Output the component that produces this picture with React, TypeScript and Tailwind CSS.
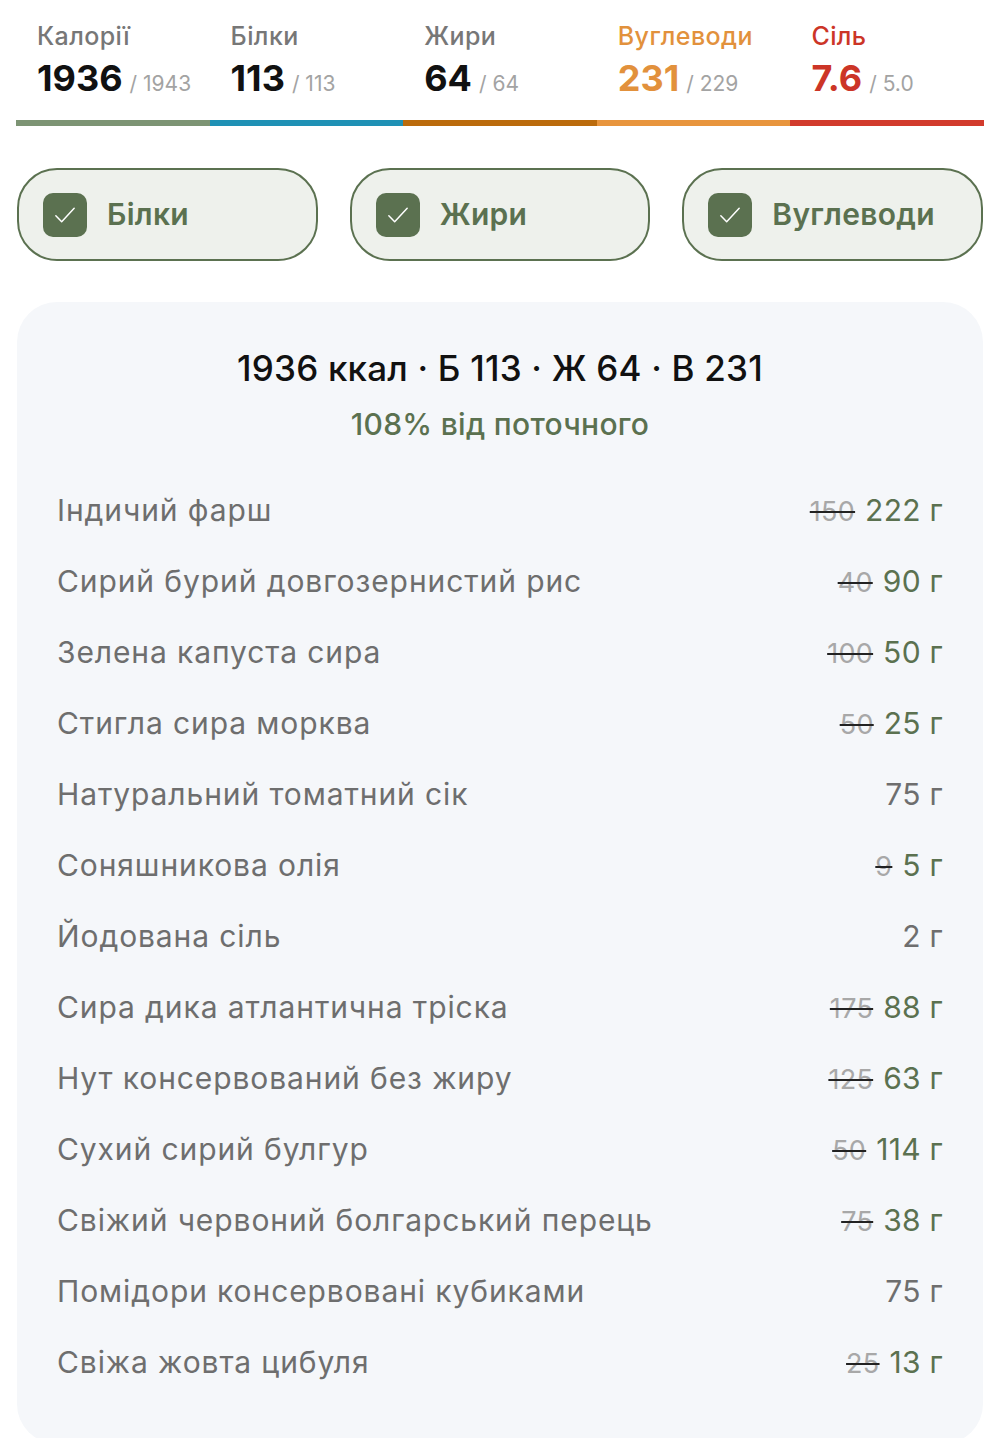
import React from 'react';

type Stat = {
  label: string;
  value: string;
  target: string;
  labelClass: string;
  valueClass: string;
  barClass: string;
};

const STATS: Stat[] = [
  { label: 'Калорії', value: '1936', target: '1943', labelClass: 'text-[#777777]', valueClass: 'text-[#111111]', barClass: 'bg-[#7d9474]' },
  { label: 'Білки', value: '113', target: '113', labelClass: 'text-[#777777]', valueClass: 'text-[#111111]', barClass: 'bg-[#1f91b5]' },
  { label: 'Жири', value: '64', target: '64', labelClass: 'text-[#777777]', valueClass: 'text-[#111111]', barClass: 'bg-[#bb6b0c]' },
  { label: 'Вуглеводи', value: '231', target: '229', labelClass: 'text-[#e2913c]', valueClass: 'text-[#e2913c]', barClass: 'bg-[#e8953d]' },
  { label: 'Сіль', value: '7.6', target: '5.0', labelClass: 'text-[#cc3527]', valueClass: 'text-[#cc3527]', barClass: 'bg-[#d23b2c]' },
];

const CHIPS = ['Білки', 'Жири', 'Вуглеводи'];

const ITEMS: { name: string; old?: string; amount: string }[] = [
  { name: 'Індичий фарш', old: '150', amount: '222 г' },
  { name: 'Сирий бурий довгозернистий рис', old: '40', amount: '90 г' },
  { name: 'Зелена капуста сира', old: '100', amount: '50 г' },
  { name: 'Стигла сира морква', old: '50', amount: '25 г' },
  { name: 'Натуральний томатний сік', amount: '75 г' },
  { name: 'Соняшникова олія', old: '9', amount: '5 г' },
  { name: 'Йодована сіль', amount: '2 г' },
  { name: 'Сира дика атлантична тріска', old: '175', amount: '88 г' },
  { name: 'Нут консервований без жиру', old: '125', amount: '63 г' },
  { name: 'Сухий сирий булгур', old: '50', amount: '114 г' },
  { name: 'Свіжий червоний болгарський перець', old: '75', amount: '38 г' },
  { name: 'Помідори консервовані кубиками', amount: '75 г' },
  { name: 'Свіжа жовта цибуля', old: '25', amount: '13 г' },
];

const Check = () => (
  <div className="w-[44px] h-[44px] rounded-[10px] bg-[#5b7150] flex items-center justify-center flex-shrink-0">
    <svg width={40} height={40} viewBox="0 0 24 24" fill="none" stroke="#ffffff" strokeWidth={0.9} strokeLinecap="round" strokeLinejoin="round">
      <path d="M6.5 12.5l3.5 3.5L17.5 8" />
    </svg>
  </div>
);

export default function App() {
  return (
    <div className="w-[1000px] min-h-[1438px] bg-white px-4 font-['Inter','Noto_Sans',sans-serif]">
      {/* stats */}
      <div className="grid grid-cols-5">
        {STATS.map(s => (
          <div key={s.label} className="flex flex-col">
            <div className={`pl-[21px] pt-[20px] text-[25px] leading-[32px] font-medium tracking-[0.4px] ${s.labelClass}`}>{s.label}</div>
            <div className="pl-[21px] mt-[3px] flex items-baseline gap-[7px] h-[46px]">
              <span className={`text-[36px] leading-[46px] font-bold ${s.valueClass}`}>{s.value}</span>
              <span className="text-[21px] text-[#a3a3a3]">/ {s.target}</span>
            </div>
            <div className={`mt-[19px] h-[6px] ${s.barClass}`} />
          </div>
        ))}
      </div>

      {/* chips */}
      <div className="mt-[42px] grid grid-cols-3 gap-[32px] px-[1px]">
        {CHIPS.map(c => (
          <div key={c} className="h-[93px] rounded-[40px] border-2 border-[#5b7150] bg-[#eef1ec] flex items-center gap-[20px] pl-[24px]">
            <Check />
            <span className="text-[30px] font-semibold tracking-[0.3px] text-[#5b7150]">{c}</span>
          </div>
        ))}
      </div>

      {/* summary card */}
      <div className="mt-[41px] mx-[1px] rounded-[40px] bg-[#f5f7fa] pt-[44px] pb-[46px] px-[40px]">
        <div className="text-center text-[35px] leading-[44px] font-medium tracking-[0.2px] text-[#111111]">1936 ккал · Б 113 · Ж 64 · В 231</div>
        <div className="mt-[16px] text-center text-[30px] leading-[36px] font-medium tracking-[0.3px] text-[#5b7150]">108% від поточного</div>
        <div className="mt-[33px] flex flex-col">
          {ITEMS.map(it => (
            <div key={it.name} className="h-[71px] flex items-center justify-between">
              <span className="text-[30px] text-[#6e6e6e] tracking-[0.9px]">{it.name}</span>
              <span className="flex items-baseline gap-[10px] text-[30px] tracking-[0.3px]">
                {it.old && (
                  <span className="text-[#a8a8a8] text-[27px] line-through decoration-[#222222] decoration-2">{it.old}</span>
                )}
                <span className={it.old ? 'text-[#5b7150]' : 'text-[#6e6e6e]'}>{it.amount}</span>
              </span>
            </div>
          ))}
        </div>
      </div>
    </div>
  );
}
